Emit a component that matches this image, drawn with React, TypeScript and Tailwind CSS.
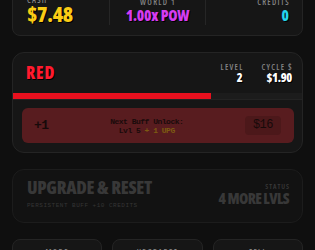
const display = "font-['Open_Sans','Noto_Sans',sans-serif] [font-stretch:75%]";
const mono = "font-['Liberation_Mono','DejaVu_Sans_Mono',monospace]";
const shadow = "[text-shadow:1px_1px_0_#000]";

function Label({ children, className = '' }: { children: React.ReactNode; className?: string }) {
  return (
    <div className={`${display} font-semibold text-[8px] leading-[8px] tracking-[1.3px] uppercase text-[#858585] ${className}`}>
      {children}
    </div>
  );
}

export default function App() {
  return (
    <div className="min-h-screen bg-[#0f0f0f] overflow-hidden">
      <div className="px-3 -mt-[15px] flex flex-col gap-4">
        {/* stats */}
        <div className="rounded-lg border border-[#242424] bg-[#161616] pt-[10px] pb-[10px]">
          <div className="grid grid-cols-3">
            <div className="pl-[14px] flex flex-col">
              <Label>Cash</Label>
              <div className={`${display} ${shadow} font-extrabold text-[21px] leading-[21px] tracking-[-0.3px] text-[#facc15]`}>$7.48</div>
            </div>
            <div className="border-x border-[#262626] flex flex-col items-center">
              <Label className="mt-[2px] mr-[-1px]">World 1</Label>
              <div className={`${display} ${shadow} font-extrabold text-[15px] leading-[15px] tracking-[-0.2px] mt-[2px] text-[#d63cf0]`}>1.00x POW</div>
            </div>
            <div className="pr-[13px] flex flex-col items-end">
              <Label className="mt-[2px] mr-[-1px]">Credits</Label>
              <div className={`${display} ${shadow} font-extrabold text-[15px] leading-[15px] mt-[2px] text-[#22d3ee]`}>0</div>
            </div>
          </div>
        </div>

        {/* color tier */}
        <div className="rounded-xl border border-[#242424] bg-[#161616] overflow-hidden">
          <div className="flex items-start justify-between pl-[13px] pr-[10px] pt-[10px] h-[40px]">
            <div className={`${display} ${shadow} font-extrabold text-[17px] leading-[17px] mt-[1px] tracking-[0.8px] text-[#ff1a2e]`}>RED</div>
            <div className="flex gap-[19px]">
              <div className="flex flex-col items-end">
                <Label className="mr-[-1px]">Level</Label>
                <div className={`${display} ${shadow} font-extrabold text-[12px] leading-[12px] mt-[1px] text-white`}>2</div>
              </div>
              <div className="flex flex-col items-end">
                <Label className="mr-[-1px]">Cycle $</Label>
                <div className={`${display} ${shadow} font-extrabold text-[12px] leading-[12px] mt-[1px] tracking-[-0.3px] text-white`}>$1.90</div>
              </div>
            </div>
          </div>
          <div className="h-[7px] bg-[#1c1c1c] border-b border-[#232323]">
            <div className="h-[6px] bg-[#e8101e]" style={{ width: '68.6%' }} />
          </div>
          <div className="pl-[9px] pr-[8px] pt-[8px] pb-[9px]">
            <div className="h-[35px] rounded-md bg-[#581c1f] flex items-center pl-[12px] pr-[13px]">
              <div className={`${mono} font-bold text-[13px] text-[#170a0a] tracking-[-0.5px] mt-[1px]`}>+1</div>
              <div className={`${mono} flex-1 font-bold text-[8px] leading-[9px] tracking-[-0.5px] text-[#1a0b0b] text-center`}>
                <div>Next Buff Unlock:</div>
                <div>Lvl 5 <span className="text-[#7d5a12]">+ 1 UPG</span></div>
              </div>
              <div className={`${mono} text-[12px] leading-[19px] h-[19px] px-[8px] rounded bg-[#4c181a] text-[#170a0a] tracking-[-0.5px]`}>$16</div>
            </div>
          </div>
        </div>

        {/* upgrade & reset */}
        <div className="rounded-xl border border-[#1c1c1c] bg-[#121212] h-[54px] flex items-start justify-between pl-[14px] pr-[13px] pt-[8px]">
          <div className="flex flex-col">
            <div className={`${display} font-extrabold whitespace-nowrap text-[18px] leading-[18px] tracking-[-0.3px] text-[#383838]`}>UPGRADE &amp; RESET</div>
            <div className={`${mono} whitespace-nowrap text-[6px] leading-[6px] tracking-[0.5px] mt-[7px] text-[#353535]`}>PERSISTENT BUFF +10 CREDITS</div>
          </div>
          <div className="flex flex-col items-end mt-[5px]">
            <div className={`${display} font-semibold text-[7px] leading-[7px] tracking-[1px] mr-[-1px] text-[#3a3a3a]`}>STATUS</div>
            <div className={`${display} font-extrabold whitespace-nowrap text-[15px] leading-[15px] tracking-[-0.6px] mt-[1px] text-[#383838]`}>4 MORE LVLS</div>
          </div>
        </div>

        {/* nav */}
        <div className="grid grid-cols-3 gap-[10px]">
          {['MODE', 'UPGRADES', 'SELL'].map((t) => (
            <div key={t} className="h-[40px] rounded-lg border border-[#242424] bg-[#161616] flex justify-center pt-[8px]">
              <Label className="text-[#666]">{t}</Label>
            </div>
          ))}
        </div>
      </div>
    </div>
  );
}
